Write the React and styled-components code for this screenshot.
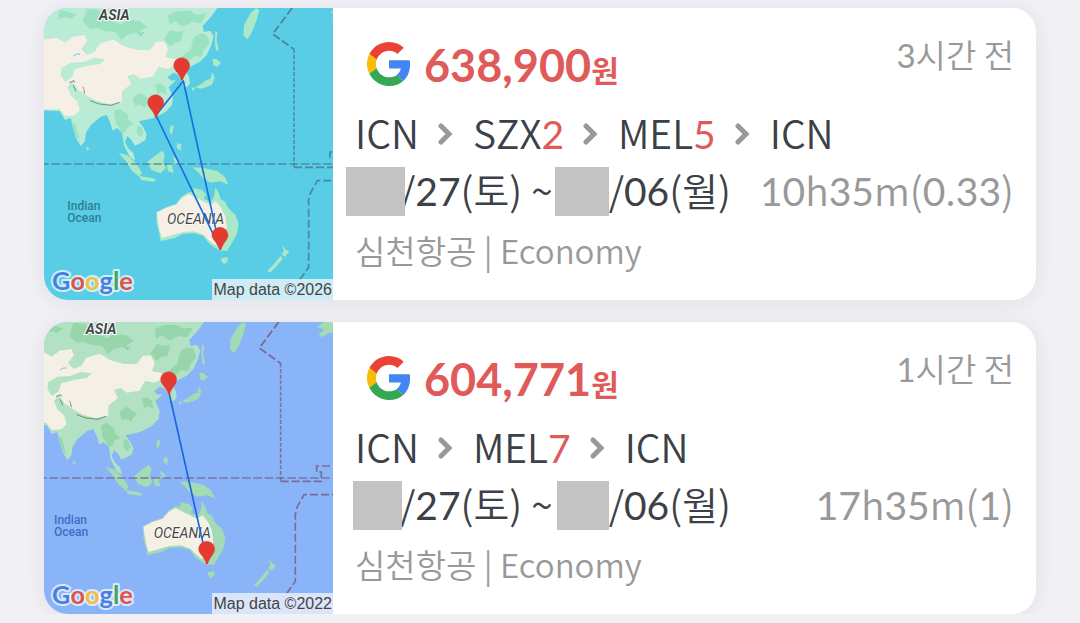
import React from "react";
import styled, { createGlobalStyle } from "styled-components";

const flights = [
  {
    id: 1,
    price: "638,900",
    ago: "3시간 전",
    route: [
      { code: "ICN" },
      { code: "SZX", days: 2 },
      { code: "MEL", days: 5 },
      { code: "ICN" },
    ],
    depart: { day: "/27(토)", inset: 0, width: 59 },
    back: { day: "/06(월)", inset: 0, width: 54 },
    duration: "10h35m(0.33)",
    airline: "심천항공",
    cabin: "Economy",
    map: {
      year: 2026,
      shift: 0,
      sea: "#5acde6",
      land: "#b9ebd5",
      forest: "#9be3c0",
      desert: "#f5efe6",
      island: "#abe8c6",
      border: "#4b7f92",
      label: "#2c7f95",
      line: "#1a6fe0",
      route: "M348 346 L430 243 L540 745 L348 346",
      pins: [
        [425, 197],
        [347, 308],
        [540, 706],
      ],
    },
  },
  {
    id: 2,
    price: "604,771",
    ago: "1시간 전",
    route: [{ code: "ICN" }, { code: "MEL", days: 7 }, { code: "ICN" }],
    depart: { day: "/27(토)", inset: 7, width: 49 },
    back: { day: "/06(월)", inset: 2, width: 52 },
    duration: "17h35m(1)",
    airline: "심천항공",
    cabin: "Economy",
    map: {
      year: 2022,
      shift: -40,
      sea: "#8ab4f8",
      land: "#b3e1c3",
      forest: "#97d6aa",
      desert: "#f5f0e5",
      island: "#a2dbb4",
      border: "#77648f",
      label: "#3b6fc4",
      line: "#1a66dd",
      route: "M428 240 L542 745",
      pins: [
        [426, 197],
        [540, 706],
      ],
    },
  },
];

// digits are set in Lato, everything around them in Noto Sans
function Digits({ children }) {
  return children
    .split(/(\d+)/)
    .map((part, i) => (i % 2 ? <Num key={i}>{part}</Num> : part));
}

function GoogleIcon() {
  return (
    <GoogleMark viewBox="0 0 48 48" role="img" aria-label="Google">
      <path
        fill="#ea4335"
        d="M24 9.5c3.54 0 6.71 1.22 9.21 3.6l6.85-6.85C35.9 2.38 30.47 0 24 0 14.62 0 6.51 5.38 2.56 13.22l7.98 6.19C12.43 13.72 17.74 9.5 24 9.5z"
      />
      <path
        fill="#4285f4"
        d="M46.98 24.55c0-1.57-.15-3.09-.38-4.55H24v9.02h12.94c-.58 2.96-2.26 5.48-4.78 7.18l7.73 6c4.51-4.18 7.09-10.36 7.09-17.65z"
      />
      <path
        fill="#fbbc05"
        d="M10.53 28.59c-.48-1.45-.76-2.99-.76-4.59s.27-3.14.76-4.59l-7.98-6.19C.92 16.46 0 20.12 0 24c0 3.88.92 7.54 2.56 10.78l7.97-6.19z"
      />
      <path
        fill="#34a853"
        d="M24 48c6.48 0 11.93-2.13 15.89-5.81l-7.73-6c-2.15 1.45-4.92 2.3-8.16 2.3-6.26 0-11.57-4.22-13.47-9.91l-7.98 6.19C6.51 42.62 14.62 48 24 48z"
      />
    </GoogleMark>
  );
}

function Chevron() {
  return (
    <Arrow viewBox="0 0 16 26" aria-hidden="true">
      <path d="M3 7 L11 15 L3 23" />
    </Arrow>
  );
}

function RouteMap({ map }) {
  return (
    <MapBox $sea={map.sea}>
      <MapArt
        viewBox="12 24 867 876"
        preserveAspectRatio="xMidYMid slice"
        role="img"
        aria-label="Route map"
      >
        <g transform={`translate(${map.shift} 0)`}>
          {/* mainland */}
          <path
            fill={map.land}
            d="M0 24 H532 L515 48 L488 78 L492 96 L510 92 L521 108 L514 135 L500 165 L482 184 L456 198 L436 210 L447 230 L450 250 L440 262 L430 260 L424 240 L414 224 L400 218 L382 232 L394 242 L408 240 L386 262 L399 290 L396 315 L375 337 L350 350 L326 358 L296 364 L310 382 L320 402 L316 420 L298 431 L284 437 L275 420 L262 408 L255 425 L264 445 L280 460 L286 482 L270 472 L252 436 L246 396 L230 384 L218 392 L210 366 L200 345 L182 350 L152 376 L138 398 L134 425 L122 438 L108 414 L98 380 L92 354 L75 360 L60 334 L0 330 Z"
          />
          {/* forests */}
          <g fill={map.forest}>
            <path d="M140 26 L176 30 L190 50 L216 64 L244 72 L262 60 L300 64 L322 82 L300 92 L308 112 L286 98 L262 104 L244 120 L226 96 L196 94 L172 84 L150 86 L128 66 Z" />
            <path d="M60 30 L88 36 L110 44 L92 56 L74 52 L52 58 Z" />
            <path d="M384 46 L410 34 L450 32 L470 44 L500 40 L482 70 L456 66 L430 80 L404 64 L388 74 Z" />
            <path d="M462 112 L480 100 L500 104 L510 130 L492 150 L484 172 L464 168 L440 190 L420 176 L436 162 L452 150 L456 130 Z" />
            <path d="M390 90 L414 96 L430 92 L424 124 L406 128 L390 140 L372 118 Z" />
            <path d="M222 334 L240 328 L262 342 L266 360 L282 372 L262 380 L258 396 L244 400 L236 380 L228 372 Z" />
            <path d="M278 294 L300 278 L312 286 L332 300 L318 312 L316 324 L300 314 L286 318 Z" />
            <path d="M345 254 L360 250 L376 260 L380 284 L364 276 L354 284 Z" />
            <path d="M292 376 L304 380 L312 400 L300 412 L290 396 Z" />
            <path d="M96 366 L106 372 L112 396 L118 420 L108 410 Z" />
          </g>
          {/* steppe and deserts */}
          <path
            fill={map.desert}
            d="M0 120 L50 114 L76 128 L98 110 L134 105 L142 124 L124 146 L140 164 L164 156 L178 132 L206 122 L222 120 L250 138 L292 150 L330 150 L348 126 L372 124 L384 146 L376 172 L404 176 L412 192 L384 206 L356 200 L338 230 L300 236 L282 222 L262 228 L274 252 L246 274 L244 306 L206 312 L168 302 L132 282 L112 262 L96 244 L82 262 L92 286 L112 304 L120 330 L104 346 L76 348 L58 326 L0 330 Z"
          />
          <path
            fill={map.land}
            d="M64 204 L92 188 L132 186 L162 174 L196 178 L180 192 L140 198 L104 208 L96 232 L76 246 L62 226 Z"
          />
          <path
            fill="none"
            stroke="#6f8f86"
            strokeWidth="3"
            d="M88 248 L102 242 L112 260 L130 262 L134 280 M100 256 L108 274 M150 302 L178 312 L214 316 L240 306 L228 292"
          />
          <path
            fill={map.desert}
            d="M220 302 L226 280 L238 288 L246 308 Z M100 248 L118 244 L132 270 L116 272 Z"
          />
          <path
            fill="none"
            stroke={map.sea}
            strokeWidth="3"
            d="M100 168 L110 162 L120 162 M300 106 L312 96"
          />
          {/* islands */}
          <g fill={map.island}>
            <path d="M632 40 L648 24 L658 30 L650 60 L636 96 L622 118 L610 106 L612 74 Z" />
            <path d="M526 92 L532 96 L530 120 L536 150 L528 152 L524 122 Z" />
            <path d="M518 178 L528 176 L543 188 L532 200 L520 196 Z" />
            <path d="M516 216 L524 232 L516 254 L498 262 L480 266 L466 262 L484 252 L500 240 L512 236 Z" />
            <path d="M454 262 L466 264 L460 274 Z" />
            <path d="M392 376 L402 378 L396 402 L388 398 Z" />
            <path d="M412 430 L424 432 L422 452 L410 444 Z M398 468 L412 478 L420 490 L408 494 Z" />
            <path d="M137 438 L148 446 L142 454 Z" />
            <path d="M236 458 L262 466 L290 492 L306 518 L298 530 L276 512 L258 484 Z" />
            <path d="M296 528 L322 532 L348 538 L342 546 L304 540 Z" />
            <path d="M322 486 L344 468 L366 452 L374 462 L370 490 L378 504 L362 520 L334 510 Z" />
            <path d="M380 492 L404 486 L396 500 L402 518 L384 514 Z" />
            <path d="M458 502 L490 504 L530 512 L552 528 L566 554 L540 544 L512 548 L490 536 L476 518 Z" />
            <path d="M544 774 L564 772 L562 786 L552 792 L544 784 Z" />
            <path d="M726 736 L738 750 L748 752 L736 770 L724 764 L732 752 Z" />
            <path d="M722 768 L728 776 L708 800 L690 818 L682 812 L702 792 Z" />
            <path d="M876 60 L894 48 L872 38 L890 24 H930 V52 L904 58 L886 70 Z" />
          </g>
          {/* australia */}
          <path
            fill={map.island}
            d="M350 636 L378 622 L408 612 L424 590 L448 576 L462 578 L460 564 L486 570 L498 582 L492 596 L512 606 L522 590 L526 562 L536 578 L542 598 L556 606 L566 626 L586 644 L596 672 L590 704 L572 736 L562 752 L542 752 L522 742 L506 730 L490 708 L462 700 L428 702 L404 714 L362 724 L358 700 L350 672 Z"
          />
          <path
            fill={map.desert}
            d="M350 638 L378 624 L408 614 L426 594 L446 582 L470 594 L494 606 L512 614 L528 604 L544 624 L556 650 L560 684 L548 716 L526 736 L506 720 L492 704 L462 694 L428 696 L400 704 L366 714 L358 690 Z"
          />
          {/* borders */}
          <g fill="none" stroke={map.border} strokeWidth="5">
            <path strokeDasharray="26 8" d="M0 492 H940" opacity="0.8" />
            <path strokeDasharray="24 9" d="M756 24 L698 102 L762 148" />
            <path strokeDasharray="12 5" d="M762 148 V502" opacity="0.8" />
            <path
              strokeDasharray="24 9"
              d="M762 502 H884 V474 H870 V456 H930 M940 542 H832 L812 578 L806 600 V802 L772 850"
              opacity="0.9"
            />
          </g>
          <SeaLabel x="82" y="629" fill={map.label}>
            Indian
          </SeaLabel>
          <SeaLabel x="82" y="665" fill={map.label}>
            Ocean
          </SeaLabel>
          <LandLabel x="177" y="60" $bold>
            ASIA
          </LandLabel>
          <LandLabel x="381" y="671">OCEANIA</LandLabel>
          <path
            fill="none"
            stroke={map.line}
            strokeWidth="5"
            strokeLinejoin="round"
            d={map.route}
          />
          {map.pins.map(([x, y]) => (
            <path
              key={`${x}-${y}`}
              fill="#e53a30"
              stroke="#c5362c"
              strokeWidth="1"
              transform={`translate(${x} ${y})`}
              d="M0 -24 C14 -24 24 -13 24 0 C24 14 8 24 3 44 H-1 C-5 24 -24 14 -24 0 C-24 -13 -14 -24 0 -24 Z"
            />
          ))}
        </g>
        <Wordmark x="36" y="869">
          <tspan fill="#4a7fe0">G</tspan>
          <tspan fill="#e0524a">o</tspan>
          <tspan fill="#f2bd42">o</tspan>
          <tspan fill="#4a7fe0">g</tspan>
          <tspan fill="#45a661">l</tspan>
          <tspan fill="#e0524a">e</tspan>
        </Wordmark>
      </MapArt>
      <Credit>Map data ©{map.year}</Credit>
    </MapBox>
  );
}

function FlightCard({ flight }) {
  return (
    <Card>
      <RouteMap map={flight.map} />
      <Details>
        <Header>
          <Price>
            <GoogleIcon />
            <Amount>
              {flight.price}
              <small>원</small>
            </Amount>
          </Price>
          <Ago>
            <Digits>{flight.ago}</Digits>
          </Ago>
        </Header>
        <Route>
          {flight.route.map((stop, i) => (
            <React.Fragment key={i}>
              {i > 0 && <Chevron />}
              <Stop>
                {stop.code}
                {stop.days && <em>{stop.days}</em>}
              </Stop>
            </React.Fragment>
          ))}
        </Route>
        <Schedule>
          <Dates>
            <Month $inset={flight.depart.inset} $width={flight.depart.width}>
              <span />
            </Month>
            <span>
              <Digits>{flight.depart.day}</Digits>
            </span>
            <Tilde>~</Tilde>
            <Month $inset={flight.back.inset} $width={flight.back.width}>
              <span />
            </Month>
            <span>
              <Digits>{flight.back.day}</Digits>
            </span>
          </Dates>
          <Duration>
            <Digits>{flight.duration}</Digits>
          </Duration>
        </Schedule>
        <Airline>
          {flight.airline} | {flight.cabin}
        </Airline>
      </Details>
    </Card>
  );
}

function App() {
  return (
    <>
      <GlobalStyle />
      <List>
        {flights.map((flight) => (
          <FlightCard key={flight.id} flight={flight} />
        ))}
      </List>
    </>
  );
}

const GlobalStyle = createGlobalStyle`
  * {
    box-sizing: border-box;
  }

  body {
    margin: 0;
    background: #f0f0f5;
    color: #3c4047;
    font-family: "Noto Sans CJK KR", sans-serif;
    font-weight: 350;
    overflow: hidden;
  }
`;

const List = styled.main`
  display: flex;
  flex-direction: column;
  gap: 22px;
  padding: 8px 44px 0;
`;

const Card = styled.article`
  display: flex;
  background: #fff;
  border-radius: 24px;
  box-shadow: 0 2px 20px rgba(40, 40, 50, 0.08);
  overflow: hidden;
`;

const MapBox = styled.div`
  position: relative;
  flex: 0 0 289px;
  background: ${(props) => props.$sea};
`;

const MapArt = styled.svg`
  position: absolute;
  inset: 0;
  width: 100%;
  height: 100%;
`;

const SeaLabel = styled.text`
  font-family: Roboto, sans-serif;
  font-size: 36px;
  font-weight: 500;
`;

const LandLabel = styled.text`
  font-family: Roboto, sans-serif;
  font-size: 42px;
  font-style: italic;
  font-weight: ${(props) => (props.$bold ? 700 : 400)};
  fill: #44474a;
  stroke: #fff;
  stroke-width: ${(props) => (props.$bold ? 6 : 3)}px;
  paint-order: stroke;
`;

const Wordmark = styled.text`
  font-family: Lato, sans-serif;
  font-size: 76px;
  font-weight: 700;
  stroke: rgba(255, 255, 255, 0.7);
  stroke-width: 12px;
  stroke-linejoin: round;
  paint-order: stroke;
`;

const Credit = styled.span`
  position: absolute;
  right: 0;
  bottom: 0;
  padding: 0 1px;
  background: rgba(245, 245, 250, 0.75);
  color: #444;
  font-family: "Liberation Sans", sans-serif;
  font-size: 16px;
  font-weight: 400;
  line-height: 21px;
  white-space: nowrap;
`;

const Details = styled.div`
  flex: 1;
  min-width: 0;
  padding: 26px 22px 20px;
`;

const Header = styled.header`
  display: flex;
  justify-content: space-between;
  height: 60px;
  margin-bottom: 10px;
`;

const Price = styled.div`
  display: flex;
  align-items: center;
  gap: 13px;
  padding-left: 12px;
`;

const GoogleMark = styled.svg`
  width: 44px;
  height: 44px;
`;

const Amount = styled.strong`
  padding-top: 6px;
  color: #e05a5a;
  font-family: Lato, "Noto Sans CJK KR", sans-serif;
  font-size: 45px;
  line-height: 60px;
  font-weight: 700;

  small {
    font-size: 30px;
  }
`;

const Num = styled.span`
  font-family: Lato, sans-serif;
  font-weight: 400;
  line-height: 1;
`;

const Ago = styled.time`
  color: #999;
  font-size: 33px;
  line-height: 40px;
`;

const Route = styled.div`
  display: flex;
  align-items: center;
  gap: 19px;
  height: 56px;
  font-size: 39px;
  line-height: 56px;
`;

const Stop = styled.span`
  em {
    color: #e05a5a;
    font-family: Lato, sans-serif;
    font-style: normal;
    font-weight: 400;
    line-height: 1;
  }
`;

const Arrow = styled.svg`
  width: 16px;
  height: 26px;
  fill: none;
  stroke: #999;
  stroke-width: 5;
  stroke-linecap: round;
`;

const Schedule = styled.div`
  display: flex;
  justify-content: space-between;
  align-items: center;
  height: 58px;
  margin: 0 0 2px -9px;
  font-size: 39px;
  line-height: 58px;
  white-space: nowrap;
`;

const Dates = styled.div`
  display: flex;
  align-items: center;
`;

const Month = styled.span`
  position: relative;
  display: flex;
  width: 54px;
  padding-top: 4px;
  padding-left: ${(props) => props.$inset}px;

  span {
    flex: none;
    width: ${(props) => props.$width}px;
    height: 49px;
    background: #c3c3c3;
  }
`;

const Tilde = styled.span`
  padding: 0 2px 0 9px;
`;

const Duration = styled.span`
  color: #999;
`;

const Airline = styled.p`
  margin: 0;
  color: #999;
  font-size: 33px;
  line-height: 60px;
`;

export default App;
